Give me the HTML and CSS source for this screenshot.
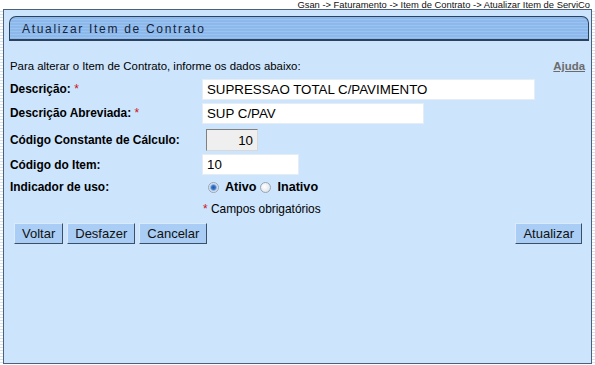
FILE: index.html
```html
<!DOCTYPE html>
<html lang="pt-BR">
  <head>
    <meta charset="UTF-8" />
    <title>Atualizar Item de Contrato</title>
    <link rel="stylesheet" href="styles.css">
  </head>
  <body>
    <div class="crumb">Gsan -&gt; Faturamento -&gt; Item de Contrato -&gt; Atualizar Item de ServiCo</div>
    <section class="panel">
      <header class="panel-title">Atualizar Item de Contrato</header>
      <form class="form">
        <div class="row intro">
          <span>Para alterar o Item de Contrato, informe os dados abaixo:</span>
          <a class="help" href="#">Ajuda</a>
        </div>
        <div class="row r-desc">
          <label class="lbl">Descrição: <span class="req">*</span></label>
          <input class="field w-long" type="text" value="SUPRESSAO TOTAL C/PAVIMENTO" />
        </div>
        <div class="row r-abrev">
          <label class="lbl">Descrição Abreviada: <span class="req">*</span></label>
          <input class="field w-mid" type="text" value="SUP C/PAV" />
        </div>
        <div class="row r-const">
          <label class="lbl">Código Constante de Cálculo:</label>
          <input class="field readonly" type="text" value="10" readonly />
        </div>
        <div class="row r-item">
          <label class="lbl">Código do Item:</label>
          <input class="field w-short" type="text" value="10" />
        </div>
        <div class="row r-uso">
          <label class="lbl">Indicador de uso:</label>
          <div class="radios">
            <span class="radio checked"></span><b>Ativo</b>
            <span class="radio"></span><b>Inativo</b>
          </div>
        </div>
        <div class="row r-note">
          <span class="lbl"></span>
          <span class="note"><span class="req">*</span> Campos obrigatórios</span>
        </div>
        <div class="actions">
          <div class="btn-group">
            <button type="button" class="btn">Voltar</button>
            <button type="button" class="btn">Desfazer</button>
            <button type="button" class="btn">Cancelar</button>
          </div>
          <button type="button" class="btn">Atualizar</button>
        </div>
      </form>
    </section>
  </body>
</html>
```

FILE: styles.css
```css
html {
  box-sizing: border-box;
}
*,
*::after,
*::before {
  box-sizing: inherit;
}

body {
  margin: 0;
  width: 595px;
  height: 365px;
  overflow: hidden;
  font-family: 'Liberation Sans', Arial, sans-serif;
  font-size: 11.4px;
  color: #000;
  background: repeating-linear-gradient(
    to bottom,
    #ffffff 0px,
    #ffffff 2px,
    #d6e2ef 2px,
    #d6e2ef 3px
  );
}

.crumb {
  height: 9px;
  line-height: 9px;
  font-size: 9.4px;
  text-align: right;
  padding-right: 5px;
  color: #111;
  background: #fff;
}

.panel {
  margin: 0 3px 0 3px;
  height: 355px;
  border: 1px solid #4c6079;
  background-color: #cce4fc;
  padding: 6px 2px 0 5px;
}

.panel-title {
  height: 25px;
  line-height: 24px;
  padding-left: 12px;
  font-size: 12px;
  letter-spacing: 1.7px;
  color: #15243a;
  border: 1px solid #2c415c;
  border-bottom-width: 2px;
  border-radius: 7px 7px 0 0;
  background: repeating-linear-gradient(
    to bottom,
    #8cb8ec 0px,
    #8cb8ec 2px,
    #9ac3f0 2px,
    #9ac3f0 3px
  );
}

.form {
  padding: 16px 4px 0 1px;
}

.row {
  display: flex;
  align-items: center;
}

.intro {
  height: 18px;
  justify-content: space-between;
  padding-right: 0;
}

.help {
  font-weight: bold;
  color: #6b6b6b;
}

.r-desc { height: 24px; margin-top: 2px; }
.r-abrev { height: 24px; }
.r-const { height: 26px; margin-top: 2px; }
.r-item { height: 23px; }
.r-uso { height: 22px; }
.r-note { height: 21px; }

.lbl {
  width: 192px;
  flex: none;
  font-weight: bold;
  font-size: 11.9px;
}

.req {
  color: #d01010;
  font-weight: normal;
}

.field {
  height: 21px;
  border: 1px solid #e4ecf4;
  background: #fff;
  font-family: 'Liberation Sans', Arial, sans-serif;
  font-size: 13.3px;
  padding: 0 4px;
  color: #000;
}

.w-long { width: 333px; }
.w-mid { width: 222px; }
.w-short { width: 97px; }

.readonly {
  margin-left: 4px;
  width: 52px;
  height: 22px;
  text-align: right;
  background: #efefef;
  border-top: 1px solid #808080;
  border-left: 1px solid #808080;
  border-right: 1px solid #d8d8d8;
  border-bottom: 1px solid #d8d8d8;
}

.radios {
  display: flex;
  align-items: center;
  padding-left: 6px;
  font-size: 12.6px;
}

.radios b {
  margin: 0 4px 0 6px;
}

.radio {
  width: 11px;
  height: 11px;
  border-radius: 50%;
  border: 1px solid #9aa4b0;
  background: radial-gradient(circle at 40% 40%, #ffffff, #d6dce4);
}

.radio.checked {
  background: radial-gradient(circle, #1e56a8 0, #3d78c8 2px, #bcd2ee 3.5px, #f4f6f8 5px);
}

.note {
  font-size: 11.9px;
  padding-left: 1px;
}

.actions {
  display: flex;
  justify-content: space-between;
  margin-top: 4px;
  padding: 0 3px 0 4px;
}

.btn-group {
  display: flex;
  gap: 4px;
}

.btn {
  height: 21px;
  padding: 0 7px;
  font-family: 'Liberation Sans', Arial, sans-serif;
  font-size: 13px;
  color: #111;
  background: #a9cdf4;
  border: 1px solid;
  border-color: #dcebfb #3b4f69 #3b4f69 #dcebfb;
  cursor: pointer;
}
```
